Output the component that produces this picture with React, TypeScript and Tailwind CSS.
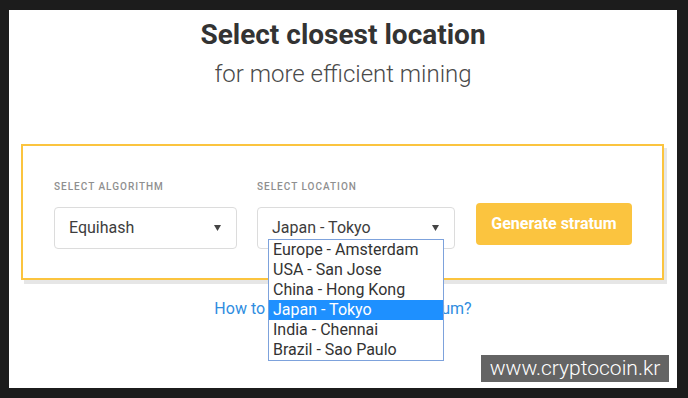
const locations = [
  "Europe - Amsterdam",
  "USA - San Jose",
  "China - Hong Kong",
  "Japan - Tokyo",
  "India - Chennai",
  "Brazil - Sao Paulo",
];

function Caret() {
  return (
    <svg width="7" height="6" viewBox="0 0 7 6" className="shrink-0">
      <path d="M0 0h7L3.5 6z" fill="#444" />
    </svg>
  );
}

function SelectBox({ value, width }: { value: string; width: string }) {
  return (
    <div
      className={`flex h-[42px] ${width} items-center justify-between rounded-[4px] border border-[#dcdcdc] bg-white pl-[14px] pr-[15px] text-[16px] text-[#3d3d3d]`}
    >
      <span>{value}</span>
      <Caret />
    </div>
  );
}

export default function App() {
  return (
    <div className="h-[398px] w-[688px] bg-[#1c1c1c] pb-[10px] pl-[9px] pr-[11px] pt-[10px] font-['Roboto',sans-serif]">
      <div className="relative flex h-full flex-col items-center bg-white pt-[9px]">
        <h1 className="text-[28px] font-bold leading-[32px] text-[#333]">Select closest location</h1>
        <p className="mt-[8px] text-[24px] font-light leading-[30px] text-[#4a4a4a]">for more efficient mining</p>

        {/* stratum form */}
        <div className="mt-[55px] w-[643px] self-start ml-[12px] border-2 border-[#fbc43f] pb-[29px] pl-[31px] pt-[34px] shadow-[3px_4px_0_#e6e6e6]">
          <div className="flex items-start">
            <div className="flex flex-col">
              <span className="text-[10px] font-medium uppercase leading-[14px] tracking-[1px] text-[#8f8f8f]">Select algorithm</span>
              <div className="mt-[13px]">
                <SelectBox value="Equihash" width="w-[183px]" />
              </div>
            </div>
            <div className="ml-[20px] flex flex-col">
              <span className="text-[10px] font-medium uppercase leading-[14px] tracking-[1px] text-[#8f8f8f]">Select location</span>
              <div className="relative mt-[13px]">
                <SelectBox value="Japan - Tokyo" width="w-[198px]" />
                <ul className="absolute left-[11px] top-[32px] z-10 w-[176px] border border-[#7da2dc] bg-white text-[16px] leading-[20px] text-[#333]">
                  {locations.map((loc) => (
                    <li
                      key={loc}
                      className={
                        loc === "Japan - Tokyo"
                          ? "h-[20px] bg-[#1e90ff] pl-[4px] text-white"
                          : "h-[20px] pl-[4px]"
                      }
                    >
                      {loc}
                    </li>
                  ))}
                </ul>
              </div>
            </div>
            <button className="ml-[21px] mt-[23px] h-[42px] w-[156px] rounded-[4px] bg-[#fbc43f] text-[16px] font-bold text-white">
              Generate stratum
            </button>
          </div>
        </div>

        <a className="mt-[17px] text-[16px] leading-[24px] text-[#2f8ddf]">How to use your generated stratum?</a>

        <div className="absolute left-[472px] top-[345px] flex h-[27px] w-[188px] items-center justify-center bg-[#646464] text-[21px] font-light leading-none text-white">
          www.cryptocoin.kr
        </div>
      </div>
    </div>
  );
}
